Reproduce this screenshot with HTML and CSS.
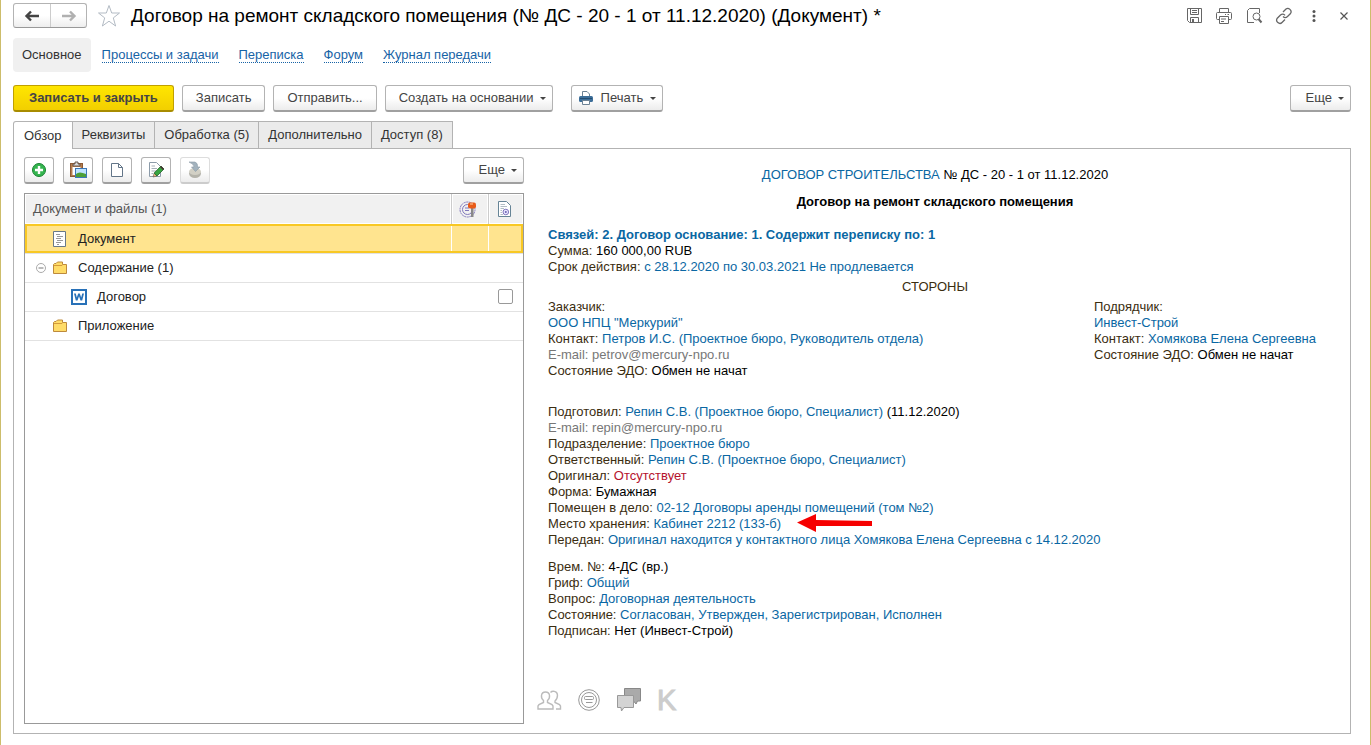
FILE: index.html
```html
<!DOCTYPE html>
<html lang="ru">
<head>
<meta charset="utf-8">
<title>Договор на ремонт складского помещения</title>
<link rel="stylesheet" href="styles.css">
</head>
<body>
<div class="window">
  <header class="titlebar">
    <div class="history">
      <button type="button" aria-label="Назад"><svg width="16" height="12" viewBox="0 0 16 12"><path d="M7 1.5L2.500 6L7 10.500M3 6H15" fill="none" stroke="#444" stroke-width="2.400"/></svg></button>
      <button type="button" aria-label="Вперед"><svg width="16" height="12" viewBox="0 0 16 12"><path d="M9 1.500L13.500 6L9 10.500M13 6H1" fill="none" stroke="#b0b0b0" stroke-width="2.400"/></svg></button>
    </div>
    <button type="button" class="plain star" aria-label="В избранное"><svg width="24" height="24" viewBox="0 0 24 24"><path d="M12 1.500L14.700 9H22.500L16.300 13.900L18.600 22L12 17.200L5.400 22L7.700 13.900L1.500 9H9.300Z" fill="#fff" stroke="#b3bbc4"/></svg></button>
    <h1>Договор на ремонт складского помещения (№ ДС - 20 - 1 от 11.12.2020) (Документ) *</h1>
    <div class="tools">
      <button type="button" class="plain" aria-label="Сохранить"><svg viewBox="0 0 18 18"><path d="M2.500 1.500H16.500V15.500H4.500L2.500 13.500ZM5.500 1.500V7.500H13.500V1.500M7 3.500H12M7 5.500H12M5.500 15.500V10.500H13.500V15.500" fill="none" stroke="#666"/><path d="M7 12H9V15H7Z" fill="#666"/></svg></button>
      <button type="button" class="plain" aria-label="Печать"><svg viewBox="0 0 18 18"><path d="M4.500 5.500V1.500H13.500V5.500M4.500 12.500H2.500Q1.500 12.500 1.500 11.500V6.500Q1.500 5.500 2.500 5.500H15.500Q16.500 5.500 16.500 6.500V11.500Q16.500 12.500 15.500 12.500H13.500M4.500 9.500H13.500V16.500H4.500ZM6 12H11M6 14.500H9M10 7.500H11M12.500 7.500H14" fill="none" stroke="#666"/></svg></button>
      <button type="button" class="plain" aria-label="Просмотр"><svg viewBox="0 0 18 18"><path d="M14.500 6V1.500H4.500L2.500 3.500V15.500H9" fill="none" stroke="#666"/><circle cx="11.500" cy="9.500" r="3.500" fill="none" stroke="#666"/><path d="M13.500 12L16.500 15.500" stroke="#666" stroke-width="2"/></svg></button>
      <button type="button" class="plain" aria-label="Ссылка"><svg viewBox="0 0 18 18"><g fill="none" stroke="#666" stroke-width="1.300"><path d="M8 5L11 2C13.500 0 17.500 3.500 15.500 6.500L12.500 9.500C11 11 9 10.500 8 9.500"/><path d="M10 12.500L7 15.500C4.500 18 0 14.500 2.300 11.200L5.500 8C7 6.800 9 7 10 8.300"/></g></svg></button>
      <button type="button" class="plain" aria-label="Меню"><svg viewBox="0 0 18 18"><g fill="#555"><circle cx="9" cy="4.500" r="1.500"/><circle cx="9" cy="9" r="1.500"/><circle cx="9" cy="13.500" r="1.500"/></g></svg></button>
      <button type="button" class="plain" aria-label="Закрыть"><svg viewBox="0 0 18 18"><path d="M5.500 5.500L12.500 12.500M12.500 5.500L5.500 12.500" stroke="#555" stroke-width="1.200"/></svg></button>
    </div>
  </header>

  <nav class="sections">
    <span class="current">Основное</span>
    <a href="#">Процессы и задачи</a>
    <a href="#">Переписка</a>
    <a href="#">Форум</a>
    <a href="#">Журнал передачи</a>
  </nav>

  <div class="commands">
    <button type="button" class="btn primary">Записать и закрыть</button>
    <button type="button" class="btn">Записать</button>
    <button type="button" class="btn">Отправить...</button>
    <button type="button" class="btn menu">Создать на основании</button>
    <button type="button" class="btn menu print"><svg width="16" height="16" viewBox="0 0 16 16"><path d="M4.500 6V1.500H9L11.500 4V6" fill="#fff" stroke="#6c8295"/><rect x="1" y="6" width="14" height="6" rx="1.500" fill="#3c6e99"/><path d="M2 8.500H14" stroke="#244d70"/><path d="M4.500 10.500H11.500V14.500H4.500Z" fill="#fff" stroke="#6c8295"/></svg>Печать</button>
    <button type="button" class="btn menu more">Еще</button>
  </div>

  <div class="tabs" role="tablist">
    <button type="button" role="tab" aria-selected="true">Обзор</button>
    <button type="button" role="tab">Реквизиты</button>
    <button type="button" role="tab">Обработка (5)</button>
    <button type="button" role="tab">Дополнительно</button>
    <button type="button" role="tab">Доступ (8)</button>
  </div>

  <main class="page">
    <section class="files">
      <div class="filebar">
        <button type="button" class="btn" aria-label="Добавить"><svg viewBox="0 0 18 18"><circle cx="9" cy="9" r="6.500" fill="#35b54f" stroke="#198332"/><path d="M9 5V13M5 9H13" stroke="#fff" stroke-width="2.400"/></svg></button>
        <button type="button" class="btn" aria-label="Вставить"><svg viewBox="0 0 18 18"><rect x="1.500" y="2.500" width="12" height="13" fill="#b67c4c" stroke="#8c5a35"/><path d="M4 5H11V3H9V1H6V3H4Z" fill="#ddd" stroke="#665548"/><rect x="3.500" y="6" width="8" height="8" fill="#fff"/><rect x="6.500" y="7.500" width="11" height="9" fill="#bfe3ff" stroke="#3c78b8"/><path d="M7 13Q10 10 17 13V16H7Z" fill="#4d9f38"/></svg></button>
        <button type="button" class="btn" aria-label="Создать"><svg viewBox="0 0 18 18"><path d="M3.500 2.500H10.500L14.500 6.500V15.500H3.500ZM10.500 2.500V6.500H14.500" fill="#fff" stroke="#627588"/></svg></button>
        <button type="button" class="btn" aria-label="Изменить"><svg viewBox="0 0 18 18"><path d="M2.500 1.500H9.500L13.500 5.500V15.500H2.500Z" fill="#fff" stroke="#8c9ba9"/><path d="M4.500 5H8M4.500 7.500H10M4.500 10H9M4.500 12.500H6" stroke="#a7b1ba"/><path d="M6 16L7.200 12L10 15Z" fill="#f0b77c" stroke="#555" stroke-width=".6"/><path d="M7.200 12L14 5L17 8L10 15Z" fill="#39a642" stroke="#25622a" stroke-width=".8"/><path d="M13 6L14 5L17 8L16 9Z" fill="#4b2b31"/></svg></button>
        <button type="button" class="btn off" aria-label="Подписать" disabled><svg viewBox="0 0 18 18"><ellipse cx="9" cy="12.500" rx="6" ry="4.500" fill="#b4b3aa"/><ellipse cx="9" cy="10.500" rx="6" ry="3.500" fill="#d2d0c5"/><path d="M3 1H9Q12 2 11.500 6H14L9.500 10.500L5.500 6H8Q8 3 3 1Z" fill="#a2b2bd" stroke="#8999a5" stroke-width=".6"/></svg></button>
        <button type="button" class="btn menu more">Еще</button>
      </div>
      <div class="list">
        <table>
          <colgroup><col><col class="c-sign"><col class="c-mark"></colgroup>
          <thead><tr>
            <th>Документ и файлы (1)</th>
            <th><svg width="18" height="18" viewBox="0 0 18 18"><g fill="none" stroke="#8177bd"><circle cx="8.500" cy="9.500" r="7.500" stroke-dasharray="2 .6"/><circle cx="8.500" cy="9.500" r="5"/><path d="M6 8H10M6 10.500H10"/></g><path d="M12 7H14.500V17H12Z" fill="#888"/><rect x="9" y="2.500" width="8" height="6" rx="2" fill="#e85b18"/><path d="M11 4H14" stroke="#ffd0a0"/></svg></th>
            <th><svg width="16" height="18" viewBox="0 0 16 18"><path d="M2.500 1.500H10.500L14.500 5.500V16.500H2.500Z" fill="#fff" stroke="#668496"/><path d="M4.500 4.500H9M4.500 6.500H11M4.500 8.500H8M4.500 10.500H6M4.500 12.500H6M4.500 14.500H7" stroke="#b4bec6"/><circle cx="9.800" cy="12" r="2.800" fill="#e8e5ff" stroke="#8177bd"/><circle cx="9.800" cy="12" r="1" fill="#6a5fb0"/></svg></th>
          </tr></thead>
          <tbody>
            <tr class="selected"><td><div class="cell l1"><span class="toggle"></span><svg width="16" height="18" viewBox="0 0 16 18"><path d="M1.500 1.500H13.500V16.500H1.500Z" fill="#fff" stroke="#687887"/><path d="M4 4.500H8M5 6.500H11M4 8.500H9M5 10.500H11M4 12.500H9M5 14.500H7" stroke="#999"/></svg>Документ</div></td><td></td><td></td></tr>
            <tr><td><div class="cell l1"><button type="button" class="plain toggle" aria-label="Свернуть"><svg width="10" height="10" viewBox="0 0 10 10"><circle cx="5" cy="5" r="4.500" fill="#fff" stroke="#aaa"/><path d="M2.500 5H7.500" stroke="#777"/></svg></button><svg width="16" height="14" viewBox="0 0 16 14"><path d="M1.500 12.500V3.500L2.500 2.500H4L5.500 1H10.500V3.500H14.500V12.500Z" fill="#ffdc68" stroke="#bd8a3c"/><path d="M2 4.500H10L11 3.500" fill="none" stroke="#d49a3a"/></svg>Содержание (1)</div></td><td></td><td></td></tr>
            <tr><td><div class="cell l2"><svg width="16" height="16" viewBox="0 0 16 16"><rect x="1" y="1" width="14" height="14" fill="#fff" stroke="#2871b8" stroke-width="2"/><path d="M3 4.500H4.800L5.800 8.600L7.200 4.500H8.800L10.200 8.600L11.200 4.500H13L11.200 11.500H9.500L8 7.200L6.500 11.500H4.800Z" fill="#2871b8"/></svg>Договор</div></td><td></td><td><input type="checkbox" aria-label="Отметить Договор"></td></tr>
            <tr><td><div class="cell l1"><span class="toggle"></span><svg width="16" height="14" viewBox="0 0 16 14"><path d="M1.500 12.500V3.500L2.500 2.500H4L5.500 1H10.500V3.500H14.500V12.500Z" fill="#ffdc68" stroke="#bd8a3c"/><path d="M2 4.500H10L11 3.500" fill="none" stroke="#d49a3a"/></svg>Приложение</div></td><td></td><td></td></tr>
          </tbody>
        </table>
      </div>
    </section>

    <article class="summary">
      <p class="center"><a href="#">ДОГОВОР СТРОИТЕЛЬСТВА</a> <b class="v">№ ДС - 20 - 1 от 11.12.2020</b></p>
      <h2>Договор на ремонт складского помещения</h2>
      <div class="block">
        <p class="links"><a href="#">Связей: 2. Договор основание: 1. Содержит переписку по: 1</a></p>
        <p>Сумма: <b class="v">160 000,00 RUB</b></p>
        <p>Срок действия: <a href="#">с 28.12.2020 по 30.03.2021 Не продлевается</a></p>
      </div>
      <p class="center parties-title">СТОРОНЫ</p>
      <div class="parties">
        <div>
          <p>Заказчик:</p>
          <p><a href="#">ООО НПЦ "Меркурий"</a></p>
          <p>Контакт: <a href="#">Петров И.С. (Проектное бюро, Руководитель отдела)</a></p>
          <p class="mail">E-mail: petrov@mercury-npo.ru</p>
          <p>Состояние ЭДО: <b class="v">Обмен не начат</b></p>
        </div>
        <div>
          <p>Подрядчик:</p>
          <p><a href="#">Инвест-Строй</a></p>
          <p>Контакт: <a href="#">Хомякова Елена Сергеевна</a></p>
          <p>Состояние ЭДО: <b class="v">Обмен не начат</b></p>
        </div>
      </div>
      <div class="block">
        <p>Подготовил: <a href="#">Репин С.В. (Проектное бюро, Специалист)</a> <b class="v">(11.12.2020)</b></p>
        <p class="mail">E-mail: repin@mercury-npo.ru</p>
        <p>Подразделение: <a href="#">Проектное бюро</a></p>
        <p>Ответственный: <a href="#">Репин С.В. (Проектное бюро, Специалист)</a></p>
        <p>Оригинал: <a href="#" class="missing">Отсутствует</a></p>
        <p>Форма: <b class="v">Бумажная</b></p>
        <p>Помещен в дело: <a href="#">02-12 Договоры аренды помещений (том №2)</a></p>
        <p class="storage">Место хранения: <a href="#">Кабинет 2212 (133-б)</a><svg class="arrow" width="76" height="20" viewBox="0 0 76 20"><path d="M0 9.500L19 1V7L75 8V13L19 13V19Z" fill="#f60000"/></svg></p>
        <p>Передан: <a href="#">Оригинал находится у контактного лица Хомякова Елена Сергеевна с 14.12.2020</a></p>
      </div>
      <div class="block last">
        <p>Врем. №: <b class="v">4-ДС (вр.)</b></p>
        <p>Гриф: <a href="#">Общий</a></p>
        <p>Вопрос: <a href="#">Договорная деятельность</a></p>
        <p>Состояние: <a href="#">Согласован, Утвержден, Зарегистрирован, Исполнен</a></p>
        <p>Подписан: <b class="v">Нет (Инвест-Строй)</b></p>
      </div>
      <div class="badges">
        <button type="button" class="plain" aria-label="Участники"><svg width="26" height="24" viewBox="0 0 26 24"><g fill="none" stroke="#bbb" stroke-width="1.400"><path d="M2 21V18L3 16.500L7.500 14.500V12.500C4.500 10 4.500 4 9.500 4C14.500 4 14.500 10 11.500 12.500V14.500L16 16.500L17 18V21Z"/><path d="M14.500 4.500C16 2.800 21 2.500 21.500 7Q21.500 11 19 13V14.500L23.500 16.500L24.500 18V21H20"/></g></svg></button>
        <button type="button" class="plain" aria-label="Печать"><svg width="24" height="24" viewBox="0 0 24 24"><g fill="none" stroke="#999"><circle cx="12" cy="12" r="10.300"/><circle cx="12" cy="12" r="7.500"/><rect x="7.500" y="8.500" width="9" height="3" rx="1"/><path d="M9 14.500H15.500"/></g></svg></button>
        <button type="button" class="plain" aria-label="Форум"><svg width="26" height="26" viewBox="0 0 26 26"><path d="M8.500 1.500H24.500V14H21.500L20 17L17.500 14H8.500Z" fill="#aaa" stroke="#888"/><path d="M1.500 8.500H17.500V20.500H8L5.500 24L5 20.500H1.500Z" fill="#d3d3d3" stroke="#999"/></svg></button>
        <button type="button" class="plain k">K</button>
      </div>
    </article>
  </main>
</div>
</body>
</html>
```
FILE: styles.css
```css
* { box-sizing: border-box; }
body { margin: 0; background: #fff; color: #333; font: 13px/16px "Liberation Sans", Arial, sans-serif; }
h1, h2, p { margin: 0; }
button { font: inherit; color: inherit; cursor: pointer; }
svg { display: block; flex: none; }
a { color: #1763a6; text-decoration: none; }

.window { min-height: 100vh; display: flex; flex-direction: column; padding: 3px 19px 11px 12px; border: solid #cdbd6b; border-width: 0 1px; }
.plain { display: flex; align-items: center; justify-content: center; padding: 0; border: 0; background: none; }

.titlebar { display: flex; align-items: center; height: 25px; }
.history { display: flex; height: 25px; border: 1px solid #b3b3b3; border-bottom-color: #999; border-radius: 3px; background: linear-gradient(#fff 50%, #eee); }
.history button { display: flex; align-items: center; justify-content: center; width: 36px; padding: 0; border: 0; background: none; }
.history button + button { border-left: 1px solid #ccc; }
.star { margin: 0 10px; }
h1 { flex: 1; font-size: 19px; line-height: 24px; font-weight: normal; color: #000; white-space: nowrap; }
.tools { display: flex; gap: 12px; margin-right: -2px; }
.tools svg { width: 18px; height: 18px; }

.sections { display: flex; align-items: center; gap: 20px; margin-top: 10px; }
.sections .current { padding: 9px 9px; margin-right: -9px; border-radius: 4px; background: #f0f0f0; }
.sections a { line-height: 14px; border-bottom: 1px dotted #1763a6; }

.commands { display: flex; gap: 8px; margin-top: 13px; }
.btn { display: flex; align-items: center; justify-content: center; height: 27px; padding: 0 13px; border: 1px solid #b3b3b3; border-bottom: 2px solid #a0a0a0; border-radius: 3px; background: linear-gradient(#fff 50%, #ececec); color: #444; white-space: nowrap; }
.primary { padding: 0 15px; border-color: #c0a000; border-bottom-color: #a88c00; background: linear-gradient(#ffe600, #f2cf00); font-weight: bold; }
.menu { padding-right: 6px; }
.menu::after { content: ""; margin-left: 6px; border: solid transparent; border-width: 3px 3px 0; border-top-color: #444; }
.print { gap: 7px; margin-left: 10px; padding-left: 6px; }
.print::after { margin-left: 0; }
.more { margin-left: auto; padding-left: 15px; }

.tabs { display: flex; margin-top: 9px; }
.tabs button { height: 27px; padding: 0 9px; border: 1px solid #b3b3b3; border-bottom: 0; border-left-width: 0; background: #ebebeb; }
.tabs button:first-child { height: 28px; padding: 0 10px; margin-bottom: -1px; border-left-width: 1px; border-radius: 3px 0 0 0; background: #fff; position: relative; }

.page { flex: 1; display: flex; border: 1px solid #b3b3b3; }
.files { width: 500px; display: flex; flex-direction: column; margin: 8px 0 9px 10px; }
.filebar { display: flex; gap: 9px; }
.filebar .btn:not(.more) { width: 30px; padding: 0; }
.filebar svg { width: 18px; height: 18px; }
.filebar .off { border-color: #ddd; border-bottom-color: #ccc; }

.list { flex: 1; margin-top: 9px; border: 1px solid #999; }
table { width: 100%; border-collapse: collapse; table-layout: fixed; }
.c-sign { width: 37px; }
.c-mark { width: 35px; }
th, td { height: 29px; padding: 0; border-bottom: 1px solid #e2e2e2; }
th { height: 30px; padding-right: 4px; background: #f1f1f1; border: solid #ccc; border-width: 0 1px 1px 0; box-shadow: inset 0 0 0 1px #fff; font-weight: normal; text-align: left; color: #555; }
th:first-child { padding-left: 8px; }
th:last-child { border-right: 0; }
th svg { margin: auto; }
.selected td { background: #ffe48f; border-right: 1px solid #fff; }
.selected td:last-child { border-right: 0; }
.selected { outline: 2px solid #f8c824; outline-offset: -2px; }
.cell { display: flex; align-items: center; color: #222; }
.toggle { width: 10px; margin-right: 6px; }
.l1 { padding-left: 11px; }
.l1 svg + svg, .cell > svg { margin-right: 10px; }
.l2 { padding-left: 46px; }
input[type=checkbox] { appearance: none; display: block; width: 15px; height: 15px; margin: 0 auto; border: 1px solid #999; border-radius: 2px; background: #fff; }

.summary { flex: 1; margin: 18px 28px 0 24px; color: #3b2d10; }
.summary a { color: #0a67a3; }
.summary .v { font-weight: normal; color: #000; }
.summary .mail { color: #777; }
.summary a.missing { color: #b5122d; }
.center, h2 { text-align: center; }
h2 { margin: 11px 0 17px; font-size: 13px; line-height: 16px; color: #000; }
.links { font-weight: bold; }
.parties-title { margin: 4px 0; }
.parties { display: grid; grid-template-columns: 546fr 228fr; margin-bottom: 25px; }
.last { margin-top: 11px; }
.storage { position: relative; width: max-content; }
.arrow { position: absolute; left: calc(100% + 16px); top: -3px; }
.badges { display: flex; align-items: center; gap: 15px; margin: 48px 0 0 -12px; }
.k { font-size: 29px; line-height: 26px; color: #ccc; -webkit-text-stroke: 1px #ccc; }
```
